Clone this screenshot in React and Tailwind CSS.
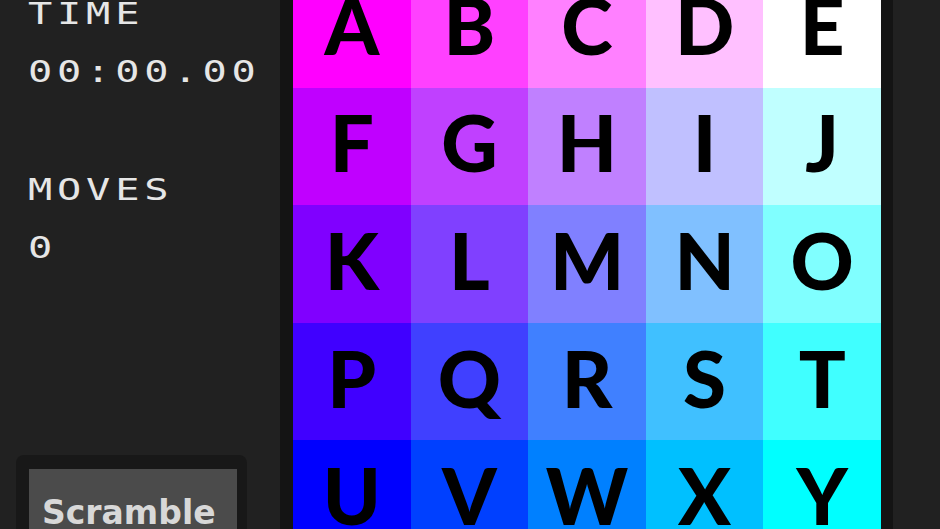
const tiles = [
  { ch: 'A', bg: 'bg-[#ff00ff]' },
  { ch: 'B', bg: 'bg-[#ff40ff]' },
  { ch: 'C', bg: 'bg-[#ff80ff]' },
  { ch: 'D', bg: 'bg-[#ffc0ff]' },
  { ch: 'E', bg: 'bg-[#ffffff]' },
  { ch: 'F', bg: 'bg-[#c000ff]' },
  { ch: 'G', bg: 'bg-[#c040ff]' },
  { ch: 'H', bg: 'bg-[#c080ff]' },
  { ch: 'I', bg: 'bg-[#c0c0ff]' },
  { ch: 'J', bg: 'bg-[#c0ffff]' },
  { ch: 'K', bg: 'bg-[#8000ff]' },
  { ch: 'L', bg: 'bg-[#8040ff]' },
  { ch: 'M', bg: 'bg-[#8080ff]' },
  { ch: 'N', bg: 'bg-[#80c0ff]' },
  { ch: 'O', bg: 'bg-[#80ffff]' },
  { ch: 'P', bg: 'bg-[#4000ff]' },
  { ch: 'Q', bg: 'bg-[#4040ff]' },
  { ch: 'R', bg: 'bg-[#4080ff]' },
  { ch: 'S', bg: 'bg-[#40c0ff]' },
  { ch: 'T', bg: 'bg-[#40ffff]' },
  { ch: 'U', bg: 'bg-[#0000ff]' },
  { ch: 'V', bg: 'bg-[#0040ff]' },
  { ch: 'W', bg: 'bg-[#0080ff]' },
  { ch: 'X', bg: 'bg-[#00c0ff]' },
  { ch: 'Y', bg: 'bg-[#00ffff]' },
];

const Stat = ({ label, value }) => (
  <div className="flex flex-col">
    <span className="leading-[58px]">{label}</span>
    <span className="leading-[58px]">{value}</span>
  </div>
);

export default function App() {
  return (
    <div className="h-[529px] w-[940px] overflow-hidden bg-[#212121] flex">
      {/* Side panel */}
      <div className="w-[280px] shrink-0 flex flex-col justify-between">
        <div className="pl-[21.5px] -mt-[16px] flex flex-col gap-[60px] font-['DejaVu_Sans_Mono',monospace] text-[31px] tracking-[3.7px] text-[#e6e6e6] scale-x-[1.3] origin-left">
          <Stat label="TIME" value="00:00.00" />
          <Stat label="MOVES" value="0" />
        </div>
        <div className="ml-[16px] w-[231px] h-[74px] rounded-t-[8px] bg-[#181818] pt-[14px] pl-[13px]">
          <button className="w-[208px] h-[70px] bg-[#4b4b4b] text-[#d8d8d8] font-['DejaVu_Sans',sans-serif] font-bold text-[33px] pt-[18px] text-left pl-[13px]">
            Scramble
          </button>
        </div>
      </div>

      {/* Board */}
      <div className="shrink-0 -mt-[30px] h-[588px] border-l-[13px] border-r-[12px] border-[#141414] bg-[#141414]">
        <div className="grid grid-cols-5 w-[588px] h-[588px]">
          {tiles.map(t => (
            <div key={t.ch} className={`${t.bg} flex items-center justify-center pb-[8px]`}>
              <span className="font-['Lato',sans-serif] font-black text-[78px] leading-none text-black">{t.ch}</span>
            </div>
          ))}
        </div>
      </div>

      <div className="flex-1" />
    </div>
  );
}
